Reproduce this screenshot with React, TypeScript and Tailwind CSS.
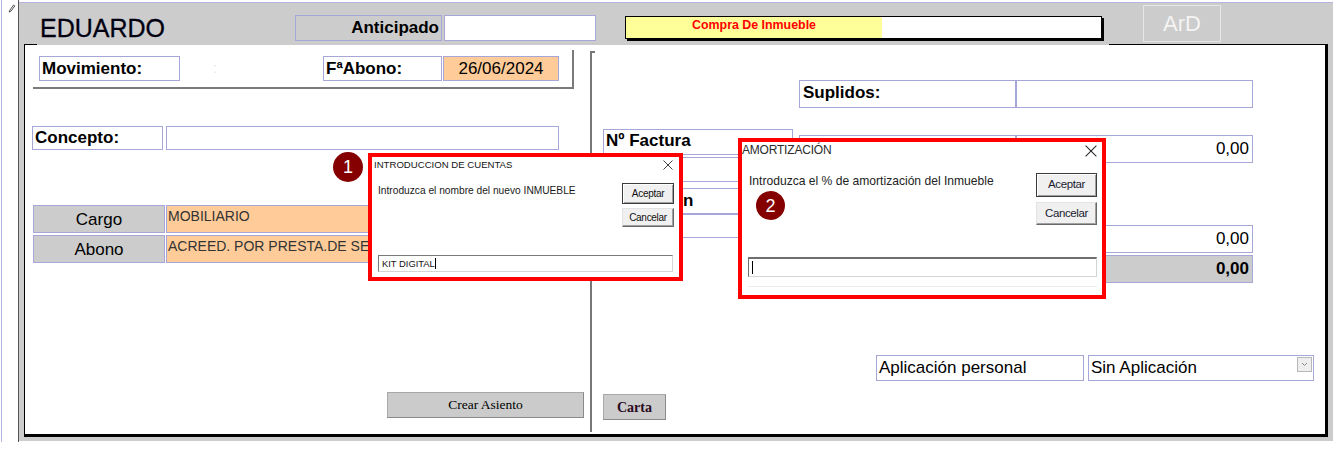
import React from "react";

const lav = "border border-[#a6a6d9]";

function XIcon({ size, color }: { size: number; color: string }) {
  return (
    <svg width={size} height={size} viewBox="0 0 10 10" className="shrink-0">
      <path d="M0.5 0.5 L9.5 9.5 M9.5 0.5 L0.5 9.5" stroke={color} strokeWidth="0.9" fill="none" />
    </svg>
  );
}

function Dialog1() {
  return (
    <div className="absolute left-[368px] top-[153px] w-[315px] h-[128px] border-4 border-[#ff0000] bg-white flex flex-col">
      <div className="flex justify-between items-start pt-[3px] pl-[2px] pr-[6px]">
        <span className="text-[9.6px] leading-none text-[#141414]">INTRODUCCION DE CUENTAS</span>
        <XIcon size={10} color="#2a2a2a" />
      </div>
      <div className="flex justify-between items-start mt-[13px] pl-[6px] pr-[5px]">
        <span className="mt-[3px] text-[10.2px] leading-none text-[#1a1a1a]">Introduzca el nombre del nuevo INMUEBLE</span>
        <div className="flex flex-col gap-[4px] w-[52px]">
          <div className="h-[21px] border border-[#3c3c3c] bg-[#f0f0f0] shadow-[inset_1px_1px_0_#fff,inset_-1px_-1px_0_#a0a0a0] flex items-center justify-center text-[10px] tracking-[-0.3px] text-[#111]">Aceptar</div>
          <div className="h-[19px] border border-t-[#e3e3e3] border-l-[#e3e3e3] border-b-[#696969] border-r-[#696969] bg-[#f0f0f0] shadow-[inset_-1px_-1px_0_#a0a0a0] flex items-center justify-center text-[10px] tracking-[-0.3px] text-[#111]">Cancelar</div>
        </div>
      </div>
      <div className="mt-[28px] ml-[6px] w-[295px] h-[17px] border border-t-[#7a7a7a] border-l-[#7a7a7a] border-b-[#d4d4d4] border-r-[#d4d4d4] flex items-center pl-[3px]">
        <span className="text-[9.4px] leading-none text-[#111]">KIT DIGITAL</span>
        <span className="w-px h-[11px] bg-black" />
      </div>
    </div>
  );
}

function Dialog2() {
  return (
    <div className="absolute left-[738px] top-[138px] w-[368px] h-[161px] border-4 border-[#ff0000] bg-white flex flex-col">
      <div className="flex justify-between items-start pt-[2px] pr-[5px]">
        <span className="text-[12px] leading-none text-[#2b2b2b] tracking-[-0.2px]">AMORTIZACIÓN</span>
        <div className="mt-[1px]">
          <XIcon size={12} color="#2a2a2a" />
        </div>
      </div>
      <div className="flex justify-between items-start mt-[16px] pl-[7px] pr-[5px]">
        <span className="mt-[2px] text-[12.1px] leading-none text-[#222]">Introduzca el % de amortización del Inmueble</span>
        <div className="flex flex-col gap-[5px] w-[61px]">
          <div className="h-[24px] border border-[#3c3c3c] bg-[#f0f0f0] shadow-[inset_1px_1px_0_#fff,inset_-1px_-1px_0_#a0a0a0] flex items-center justify-center text-[11.5px] tracking-[-0.4px] text-[#1b1b30]">Aceptar</div>
          <div className="h-[23px] border border-t-[#e3e3e3] border-l-[#e3e3e3] border-b-[#696969] border-r-[#696969] bg-[#f0f0f0] shadow-[inset_-1px_-1px_0_#a0a0a0] flex items-center justify-center text-[11.5px] tracking-[-0.4px] text-[#1b1b30]">Cancelar</div>
        </div>
      </div>
      <div className="mt-[32px] ml-[6px] w-[349px] h-[20px] border border-t-[#6f6f6f] border-l-[#6f6f6f] border-t-2 border-b-[#d4d4d4] border-r-[#d4d4d4] flex items-center pl-[3px]">
        <span className="w-px h-[13px] bg-black" />
      </div>
      <div className="mt-[9px] ml-[6px] w-[349px] h-px bg-[#ececec]" />
    </div>
  );
}

function Badge({ n, cls }: { n: string; cls: string }) {
  return (
    <div className={`absolute ${cls} rounded-full bg-[#850000] flex items-center justify-center text-white text-[18px] leading-none`}>
      {n}
    </div>
  );
}

export default function App() {
  return (
    <div className="relative w-[1333px] h-[449px] bg-white overflow-hidden flex items-start font-['Liberation_Sans',Arial,sans-serif] text-black">
      {/* record selector strip */}
      <div className="ml-[1px] w-[18px] h-[442px] border-l border-[#b4b4e0] border-r border-r-[#555555] flex flex-col">
        <svg width="8" height="9" viewBox="0 0 8 9" className="mt-[4px] ml-[6px]">
          <path d="M1.2 8 L1.8 6.2 L5.6 1 L6.8 1.9 L3 7.1 Z" stroke="#2a2a2a" strokeWidth="0.8" fill="none" />
        </svg>
      </div>

      {/* main form */}
      <div className="mt-[2px] w-[1314px] h-[439px] border-t border-[#b4b4e0] bg-[#cccccc] flex flex-col">
        {/* header */}
        <div className="h-[41px] flex items-start shrink-0">
          <div className="ml-[21px] w-[255px] mt-[13px] text-[25px] leading-none text-[#000010] [-webkit-text-stroke:0.3px_#000010]">EDUARDO</div>
          <div className={`mt-[12px] w-[147px] h-[26px] bg-[#cccccc] ${lav} flex items-center justify-end pr-[2px] pb-[1px] text-[17px] font-bold`}>
            Anticipado
          </div>
          <div className={`ml-[2px] mt-[12px] w-[152px] h-[26px] bg-white ${lav}`} />
          <div className="ml-[29px] mt-[13px] w-[477px] h-[23px] border border-black shadow-[2px_2px_0_#000] bg-white flex">
            <div className="w-[256px] h-full bg-[#ffff99] flex justify-center pt-[2px]">
              <span className="text-[12.4px] leading-none font-bold text-[#ff0000]">Compra De Inmueble</span>
            </div>
          </div>
          <div className="ml-[41px] mt-[2px] w-[78px] h-[37px] border border-[#e6e6e6] flex items-center justify-center text-[22px] text-[#f4f4f4] leading-none">
            ArD
          </div>
        </div>

        {/* panel */}
        <div className="ml-[5px] w-[1304px] h-[393px] bg-white border-l border-black border-r-[3px] border-b-[3px] border-r-black border-b-black flex flex-col shrink-0">
          <div className="h-px flex shrink-0">
            <div className="w-[12px] bg-black" />
            <div className="flex-1 bg-[#cccccc]" />
            <div className="w-[216px] bg-black" />
          </div>
          <div className="flex flex-1">
            {/* left column */}
            <div className="w-[565px] flex flex-col">
              <div className="ml-[8px] mt-[5px] w-[541px] h-[39px] border-r-2 border-b-2 border-[#7a7a7a] flex items-start pt-[6px] pl-[6px]">
                <div className={`w-[141px] h-[25px] ${lav} flex items-center pl-[2px] text-[17px] font-bold`}>Movimiento:</div>
                <div className="w-[143px] h-[25px] flex items-center pl-[33px] text-[14px] text-[#e8e8e8]">:</div>
                <div className={`w-[119px] h-[25px] ${lav} flex items-center pl-[2px] text-[17px] font-bold`}>FªAbono:</div>
                <div className={`ml-[1px] w-[116px] h-[25px] ${lav} bg-[#ffcc99] flex items-center justify-center text-[17px]`}>26/06/2024</div>
              </div>
              <div className="mt-[37px] ml-[7px] flex">
                <div className={`w-[131px] h-[24px] ${lav} flex items-center pl-[2px] text-[17px] font-bold`}>Concepto:</div>
                <div className={`ml-[3px] w-[393px] h-[24px] ${lav}`} />
              </div>
              <div className="mt-[55px] ml-[8px] flex">
                <div className={`w-[132px] h-[28px] ${lav} bg-[#cccccc] flex items-center justify-center pt-px text-[17px]`}>Cargo</div>
                <div className={`ml-[1px] w-[393px] h-[28px] ${lav} bg-[#ffcc99] pt-[2px] pl-[1px] text-[14px] leading-[16px] text-[#333333]`}>MOBILIARIO</div>
              </div>
              <div className="mt-[2px] ml-[8px] flex">
                <div className={`w-[132px] h-[28px] ${lav} bg-[#cccccc] flex items-center justify-center pt-px text-[17px]`}>Abono</div>
                <div className={`ml-[1px] w-[393px] h-[28px] ${lav} bg-[#ffcc99] pt-[2px] pl-[1px] text-[14px] leading-[16px] text-[#333333] whitespace-nowrap overflow-hidden`}>ACREED. POR PRESTA.DE SE</div>
              </div>
              <div className="mt-[129px] ml-[362px] w-[197px] h-[26px] bg-[#cbcbcb] border border-[#a8a8a8] border-b-[#8a8a8a] border-r-[#8a8a8a] flex items-center justify-center font-['Liberation_Serif',serif] text-[13.5px] text-[#000]">
                Crear Asiento
              </div>
            </div>

            {/* separator */}
            <div className="mt-[6px] w-[5px] h-[381px] border-l-2 border-t-2 border-[#777777] shrink-0" />

            {/* right column */}
            <div className="flex-1 flex flex-col">
              <div className="mt-[35px] ml-[204px] flex">
                <div className={`w-[217px] h-[28px] ${lav} flex items-center pl-[3px] pb-[3px] text-[17px] font-bold`}>Suplidos:</div>
                <div className={`w-[237px] h-[28px] ${lav}`} />
              </div>
              <div className="mt-[21px] flex items-start">
                <div className="ml-[8px] w-[190px] flex flex-col">
                  <div className={`h-[26px] ${lav} flex items-center pl-[2px] pb-[2px] text-[17px] font-bold`}>Nº Factura</div>
                  <div className={`mt-[2px] h-[25px] ${lav}`} />
                  <div className={`mt-[6px] h-[26px] ${lav} flex items-center pl-[79px] text-[17px] font-bold`}>n</div>
                  <div className={`h-[24px] ${lav}`} />
                </div>
                <div className="ml-[6px] mt-[6px] flex flex-col">
                  <div className="flex">
                    <div className={`w-[217px] h-[28px] ${lav}`} />
                    <div className={`w-[237px] h-[28px] ${lav} flex items-center justify-end pr-[3px] text-[17px]`}>0,00</div>
                  </div>
                  <div className="mt-[62px] flex">
                    <div className={`w-[217px] h-[28px] ${lav}`} />
                    <div className={`w-[237px] h-[28px] ${lav} flex items-center justify-end pr-[3px] text-[17px]`}>0,00</div>
                  </div>
                  <div className="mt-[2px] flex">
                    <div className={`w-[217px] h-[28px] ${lav} bg-[#cccccc]`} />
                    <div className={`w-[237px] h-[28px] ${lav} bg-[#cccccc] flex items-center justify-end pr-[3px] text-[17px] font-bold`}>0,00</div>
                  </div>
                </div>
              </div>
              <div className="mt-[72px] ml-[281px] flex">
                <div className={`w-[208px] h-[26px] ${lav} flex items-center pl-[2px] text-[17px]`}>Aplicación personal</div>
                <div className={`ml-[4px] w-[226px] h-[26px] ${lav} flex items-start justify-between`}>
                  <span className="mt-[3px] ml-[2px] text-[17px] leading-[18px]">Sin Aplicación</span>
                  <div className="mt-[1px] mr-[1px] w-[15px] h-[15px] bg-[#eeeeee] border border-[#b8b8b8] flex items-center justify-center">
                    <svg width="7" height="5" viewBox="0 0 7 5">
                      <path d="M1 1 L3.5 3.5 L6 1" stroke="#8a8a8a" strokeWidth="1" fill="none" />
                    </svg>
                  </div>
                </div>
              </div>
              <div className="mt-[13px] ml-[8px] w-[63px] h-[26px] bg-[#cbcbcb] border border-[#a8a8a8] border-b-[#8a8a8a] border-r-[#8a8a8a] flex items-center justify-center font-['Liberation_Serif',serif] font-bold text-[14px] text-[#2a0a22]">
                Carta
              </div>
            </div>
          </div>
        </div>
      </div>

      <Dialog1 />
      <Dialog2 />
      <Badge n="1" cls="left-[333px] top-[152px] w-[30px] h-[30px]" />
      <Badge n="2" cls="left-[756px] top-[191px] w-[29px] h-[29px]" />
    </div>
  );
}
